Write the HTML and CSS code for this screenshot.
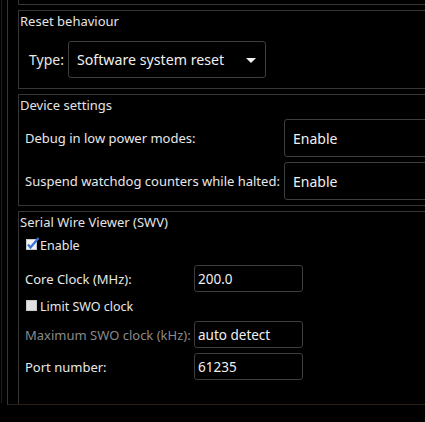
FILE: index.html
```html
<!DOCTYPE html>
<html>
<head>
<meta charset="utf-8">
<link rel="stylesheet" href="styles.css">
</head>
<body>
<div class="frame">
  <div class="viewport">
    <div class="content">
      <div class="group stub"></div>

      <div class="group">
        <div class="title">Reset behaviour</div>
        <div class="type-row">
          <span class="type-label">Type:</span>
          <div class="combo">
            <span>Software system reset</span>
            <svg class="arrow" width="10" height="5" viewBox="0 0 10 5"><polygon points="0,0 10,0 5,5" fill="#f2f2f2"/></svg>
          </div>
        </div>
      </div>

      <div class="group device">
        <div class="title">Device settings</div>
        <div class="dev-grid">
          <span class="dev-label">Debug in low power modes:</span>
          <div class="field">Enable</div>
          <span class="dev-label">Suspend watchdog counters while halted:</span>
          <div class="field">Enable</div>
        </div>
      </div>

      <div class="group swv">
        <div class="title">Serial Wire Viewer (SWV)</div>
        <div class="swv-body">
          <label class="check-row r-enable">
            <svg class="cb" width="14" height="13" viewBox="0 0 14 13">
              <rect x="0.5" y="2.5" width="10" height="10" fill="#f4f4f4" stroke="#c8c8c8"/>
              <polyline points="2,7.5 4.5,10.5 12.5,1" fill="none" stroke="#3b74d8" stroke-width="2.2"/>
            </svg>
            <span>Enable</span>
          </label>
          <div class="in-row r-core">
            <span class="in-label">Core Clock (MHz):</span>
            <div class="input">200.0</div>
          </div>
          <label class="check-row r-limit">
            <svg class="cb" width="14" height="13" viewBox="0 0 14 13">
              <rect x="0.5" y="2.5" width="10" height="10" fill="#e2e2e2" stroke="#c8c8c8"/>
            </svg>
            <span>Limit SWO clock</span>
          </label>
          <div class="in-row r-max">
            <span class="in-label disabled">Maximum SWO clock (kHz):</span>
            <div class="input">auto detect</div>
          </div>
          <div class="in-row r-port">
            <span class="in-label">Port number:</span>
            <div class="input">61235</div>
          </div>
        </div>
      </div>
    </div>
  </div>
</div>
</body>
</html>
```

FILE: styles.css
```css
html, body {
  margin: 0;
  padding: 0;
  background: #000;
  overflow: hidden;
}
body {
  font-family: "Noto Sans", "DejaVu Sans", sans-serif;
  color: #e8e8e8;
  font-size: 13px;
  width: 700px;
  height: 422px;
  white-space: nowrap;
}
.frame {
  margin-left: 1px;
  border-left: 1px solid #1e1e1e;
  height: 403px;
}
.viewport {
  margin-left: 5px;
  border-left: 1px solid #363636;
  border-bottom: 1px solid #2a2016;
  height: 404px;
  overflow: hidden;
}
.content {
  padding-left: 10px;
}
.group {
  border: 1px solid #363636;
  width: 560px;
  margin-bottom: 5px;
}
.group.stub {
  border-top: none;
  height: 4px;
}
.title {
  font-size: 13px;
  line-height: 18px;
  padding: 1px 0 0 1px;
  color: #e4e4e4;
}
.type-row {
  display: flex;
  align-items: center;
  margin-top: 11px;
  padding: 0 0 10px 10px;
}
.type-label {
  font-size: 14px;
  width: 39px;
}
.combo {
  box-sizing: border-box;
  width: 198px;
  height: 37px;
  border: 1px solid #3e3e3e;
  border-radius: 3px;
  display: flex;
  align-items: center;
  justify-content: space-between;
  padding: 0 9px 0 8px;
  font-size: 14.2px;
  color: #f0f0f0;
}
.arrow {
  display: block;
  margin-top: 2px;
}
.dev-grid {
  display: grid;
  grid-template-columns: 259px 200px;
  row-gap: 5px;
  margin-top: 5px;
  padding: 0 0 5px 6px;
  align-items: center;
}
.dev-label {
  font-size: 13px;
}
.field {
  box-sizing: border-box;
  height: 38px;
  border: 1px solid #3e3e3e;
  border-radius: 3px;
  display: flex;
  align-items: center;
  padding-left: 8px;
  font-size: 14px;
  color: #f0f0f0;
}
.swv {
  height: 240px;
}
.swv-body {
  display: flex;
  flex-direction: column;
  padding-left: 6px;
}
.check-row {
  display: flex;
  align-items: center;
  height: 20px;
  padding-left: 1px;
  font-size: 12.5px;
}
.cb {
  display: block;
  margin-top: -3px;
}
.r-enable { margin-top: 4px; }
.r-core { margin-top: 10px; }
.r-limit { margin-top: 4px; }
.r-max { margin-top: 5px; }
.r-port { margin-top: 5px; }
.in-row {
  display: flex;
  align-items: center;
  height: 27px;
}
.in-label {
  width: 169px;
  font-size: 13px;
}
.in-label.disabled {
  color: #8a8a8a;
}
.input {
  box-sizing: border-box;
  width: 109px;
  height: 27px;
  border: 1px solid #3e3e3e;
  border-radius: 3px;
  display: flex;
  align-items: center;
  padding-left: 3px;
  font-size: 13.5px;
  color: #f0f0f0;
}
```
